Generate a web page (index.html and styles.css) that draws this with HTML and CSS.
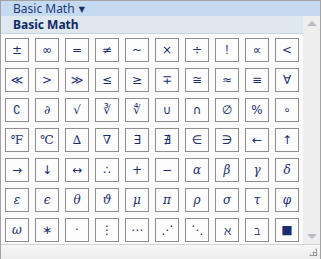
FILE: index.html
```html
<!DOCTYPE html>
<html lang="en">
<head>
    <meta charset="UTF-8">
    <meta name="viewport" content="width=device-width, initial-scale=1.0">
    <title>Basic Math</title>
    <link rel="stylesheet" href="styles.css">
</head>
<body>
    <div class="window">
        <div class="title-bar">
            <span class="title">Basic Math</span>
            <span class="caret">&#9660;</span>
        </div>
        <div class="main">
            <div class="content">
                <div class="group-header">Basic Math</div>
                <div class="grid">
                    <button class="sym">&plusmn;</button>
                    <button class="sym">&infin;</button>
                    <button class="sym">=</button>
                    <button class="sym">&ne;</button>
                    <button class="sym">~</button>
                    <button class="sym">&times;</button>
                    <button class="sym">&divide;</button>
                    <button class="sym bang">!</button>
                    <button class="sym">&prop;</button>
                    <button class="sym">&lt;</button>

                    <button class="sym">&#8810;</button>
                    <button class="sym">&gt;</button>
                    <button class="sym">&#8811;</button>
                    <button class="sym">&le;</button>
                    <button class="sym">&ge;</button>
                    <button class="sym">&#8723;</button>
                    <button class="sym">&cong;</button>
                    <button class="sym">&asymp;</button>
                    <button class="sym">&equiv;</button>
                    <button class="sym">&forall;</button>

                    <button class="sym serif">&#8705;</button>
                    <button class="sym serif it">&part;</button>
                    <button class="sym">&radic;</button>
                    <button class="sym">&#8731;</button>
                    <button class="sym">&#8732;</button>
                    <button class="sym">&cup;</button>
                    <button class="sym">&cap;</button>
                    <button class="sym">&empty;</button>
                    <button class="sym">%</button>
                    <button class="sym">&#8728;</button>

                    <button class="sym serif">&#8457;</button>
                    <button class="sym serif">&#8451;</button>
                    <button class="sym serif">&#8710;</button>
                    <button class="sym serif">&nabla;</button>
                    <button class="sym">&exist;</button>
                    <button class="sym">&#8708;</button>
                    <button class="sym">&isin;</button>
                    <button class="sym">&ni;</button>
                    <button class="sym">&larr;</button>
                    <button class="sym">&uarr;</button>

                    <button class="sym">&rarr;</button>
                    <button class="sym">&darr;</button>
                    <button class="sym">&harr;</button>
                    <button class="sym">&there4;</button>
                    <button class="sym">+</button>
                    <button class="sym">&minus;</button>
                    <button class="sym serif it">&alpha;</button>
                    <button class="sym serif it">&beta;</button>
                    <button class="sym serif it">&gamma;</button>
                    <button class="sym serif it">&delta;</button>

                    <button class="sym serif it">&epsilon;</button>
                    <button class="sym serif it">&#1013;</button>
                    <button class="sym serif it">&theta;</button>
                    <button class="sym serif it">&#977;</button>
                    <button class="sym serif it">&mu;</button>
                    <button class="sym serif it">&pi;</button>
                    <button class="sym serif it">&rho;</button>
                    <button class="sym serif it">&sigma;</button>
                    <button class="sym serif it">&tau;</button>
                    <button class="sym serif it">&#966;</button>

                    <button class="sym serif it">&omega;</button>
                    <button class="sym">&#8727;</button>
                    <button class="sym">&middot;</button>
                    <button class="sym">&#8942;</button>
                    <button class="sym">&#8943;</button>
                    <button class="sym">&#8944;</button>
                    <button class="sym">&#8945;</button>
                    <button class="sym serif">&alefsym;</button>
                    <button class="sym serif">&#8502;</button>
                    <button class="sym">&#9632;</button>
                </div>
            </div>
            <div class="scrollbar">
                <span class="arrow up"></span>
                <span class="arrow down"></span>
            </div>
        </div>
        <div class="status-bar">
            <span class="grip"></span>
        </div>
    </div>
</body>
</html>
```
FILE: styles.css
```css
body {
    margin: 0;
    font-family: "Noto Sans", "DejaVu Sans", sans-serif;
    background-color: #ffffff;
}
.window {
    width: 321px;
    height: 259px;
    box-sizing: border-box;
    border: 1px solid #a3a3a3;
    border-bottom: none;
    display: flex;
    flex-direction: column;
    background-color: #fbfbfb;
}
.title-bar {
    height: 15px;
    background-color: #c5d9f1;
    color: #1c3b7c;
    font-size: 12px;
    line-height: 15px;
    padding-left: 12px;
    display: flex;
    align-items: center;
    gap: 4px;
}
.caret {
    font-size: 8px;
    color: #1a2f66;
}
.main {
    display: flex;
    height: 228px;
}
.content {
    flex: 1;
}
.group-header {
    height: 17px;
    line-height: 17px;
    background-color: #dfe7ef;
    border-bottom: 1px solid #c9d1da;
    color: #102a66;
    font-weight: bold;
    font-size: 12px;
    padding-left: 12px;
}
.grid {
    display: grid;
    grid-template-columns: repeat(10, 24px);
    grid-auto-rows: 24px;
    gap: 6px;
    padding: 4px 0 0 4px;
}
.sym {
    box-sizing: border-box;
    width: 24px;
    height: 24px;
    padding: 0;
    border: 1px solid #8e8e8e;
    background-color: #fdfdfd;
    color: #1b2d6e;
    font-family: "DejaVu Sans", sans-serif;
    font-size: 12px;
    display: flex;
    align-items: center;
    justify-content: center;
}
.bang {
    font-family: "Liberation Sans", sans-serif;
}
.serif {
    font-family: "DejaVu Serif", "Liberation Serif", serif;
}
.it {
    font-style: italic;
}
.scrollbar {
    width: 17px;
    background-color: #eeeeee;
    display: flex;
    flex-direction: column;
    justify-content: space-between;
    align-items: center;
    padding: 5px 0;
    box-sizing: border-box;
}
.arrow {
    width: 0;
    height: 0;
    border-left: 5px solid transparent;
    border-right: 5px solid transparent;
}
.arrow.up {
    border-bottom: 5px solid #b8bcc2;
}
.arrow.down {
    border-top: 5px solid #b8bcc2;
}
.status-bar {
    flex: 1;
    border-top: 1px solid #d4d4d4;
    background: linear-gradient(#f7f7f7, #ececec);
    position: relative;
}
.grip {
    position: absolute;
    right: 3px;
    bottom: 3px;
    width: 8px;
    height: 8px;
    background-image: radial-gradient(circle, #9a9a9a 1px, transparent 1.2px);
    background-size: 3px 3px;
    clip-path: polygon(100% 0, 100% 100%, 0 100%);
}
```
